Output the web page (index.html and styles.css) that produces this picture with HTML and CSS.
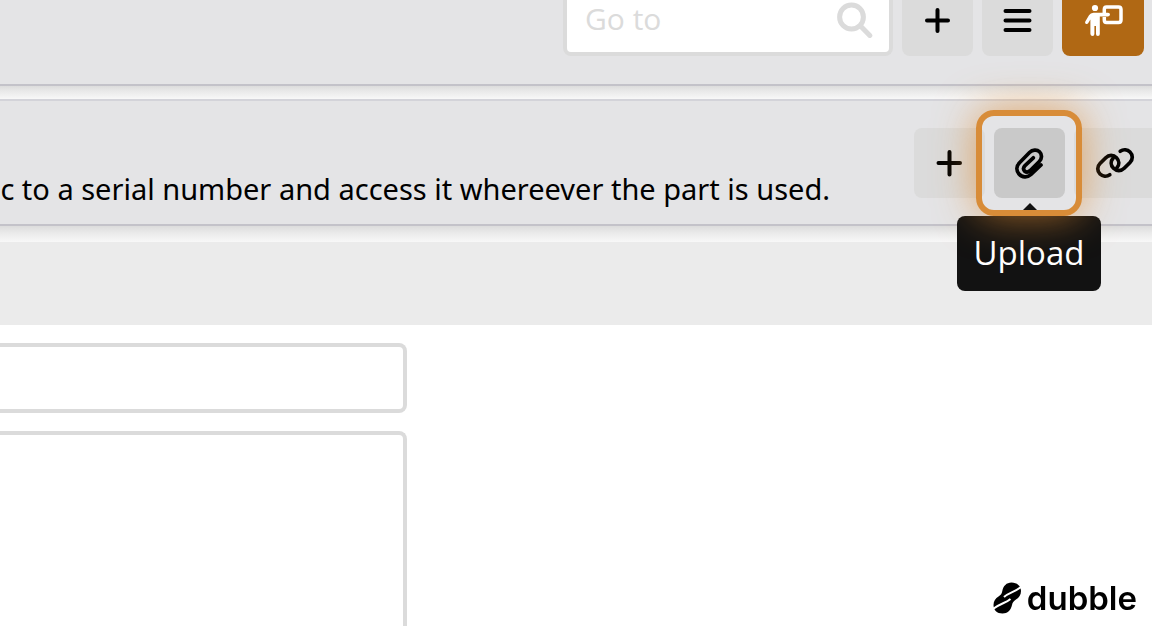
FILE: index.html
```html
<!DOCTYPE html>
<html lang="en">
<head>
<meta charset="utf-8">
<title>Serial number documents</title>
<link rel="stylesheet" href="styles.css">
</head>
<body>
<header class="topbar">
  <label class="search">
    <input class="search-input" type="text" placeholder="Go to" aria-label="Go to">
    <svg class="search-icon" viewBox="0 0 36 36" aria-hidden="true"><circle cx="14.500" cy="15" r="11.900"/><path d="M24 24.500l8.800 9"/></svg>
  </label>
  <button class="btn btn-top" aria-label="Add"><svg class="icon" viewBox="0 0 40 40"><path d="M19.500 10v21M9 20.500h21"/></svg></button>
  <button class="btn btn-top" aria-label="Menu"><svg class="icon" viewBox="0 0 40 40"><path d="M7.500 11h24M7.500 20.500h24M7.500 30h24"/></svg></button>
  <button class="btn btn-top btn-teach" aria-label="Training"><svg class="icon" viewBox="0 0 40 40"><path class="board" d="M21.300 13V9.500Q21.300 7 23.500 7H35.500Q38 7 38 9.500V20Q38 22.500 35.500 22.500H23.500Q21.300 22.500 21.300 20V17"/><circle class="solid" cx="12" cy="8" r="3.100"/><path class="solid" d="M10.500 12.800H25Q27 12.800 27 14.600T25 16.400H16.800V34Q16.800 36 14.900 36T13 34V26H11.400V34Q11.400 36 9.500 36T7.400 34V19.500L5.300 23Q4.500 24.500 3 23.900T2.300 21.500L6 15.300Q7.500 12.800 10.500 12.800Z"/></svg></button>
</header>
<section class="panel">
  <p class="description">c to a serial number and access it whereever the part is used.</p>
  <div class="tools">
    <button class="btn" aria-label="Add"><svg class="icon" viewBox="0 0 40 40"><path d="M19.500 9v22.500M8.500 20h21.500"/></svg></button>
    <div class="upload">
      <button class="btn btn-active" aria-label="Upload" aria-describedby="upload-tip"><svg class="icon" viewBox="0 0 40 40"><path class="line" d="M31 22L21 31.500C17.500 34.800 12 34.500 9 31C6 27.500 6.300 23 9.500 19.800L19.500 9.500C22.500 6.500 27 6.300 29.500 8.800C32.300 11.500 32 15.800 29.300 18.500L20 27.700C18.300 29.300 16 29.300 14.500 28C13.200 26.500 13.300 24.300 15 22.600L23.300 14.800"/></svg></button>
      <span class="tip" id="upload-tip" role="tooltip">Upload</span>
      <span class="ring"></span>
    </div>
    <button class="btn btn-link" aria-label="Link"><svg class="icon" viewBox="0 0 40 40"><path class="line" d="M16.800 31.800C13.500 34 9.500 33.500 7 31C4 28 4 23.500 7 20.500L12.800 14.700C15.800 11.700 20.500 11.700 23.500 14.700C26.500 17.700 26.500 22 23.800 25"/><path class="line" d="M27.200 8.200C30.500 6 34.500 6.500 37 9C40 12 40 16.500 37 19.500L31.200 25.300C28.200 28.300 23.500 28.300 20.500 25.300C17.500 22.300 17.500 18 20.200 15"/></svg></button>
  </div>
</section>
<div class="band"></div>
<main class="form">
  <input class="field" type="text" aria-label="Title">
  <textarea class="field field-tall" aria-label="Description"></textarea>
</main>
<footer class="brand">
  <svg class="brand-mark" viewBox="0 0 28 32" aria-hidden="true"><path d="M18.500.5C24 .5 28 4 28 9C28 13 26 15.500 23 17.500C20.500 19 19.500 20.500 19 23C18 28 14.500 31.500 9.500 31.500C4 31.500.5 28 .5 23C.5 19 2.500 16.500 5.500 14.500C8 13 8.800 11.500 9.300 9C10.300 4 13.500.5 18.500.5Z"/><path class="cut" d="M11 15C15 11 21 10.500 28 5M0 27C7 21.500 13 21 17.500 17"/></svg>
  <span>dubble</span>
</footer>
</body>
</html>
```
FILE: styles.css
```css
* { box-sizing: border-box; }
body {
  margin: 0;
  min-height: 100vh;
  display: flex;
  flex-direction: column;
  overflow: hidden;
  background: #fff;
  color: #000;
  font-family: "Open Sans", "Noto Sans", sans-serif;
}
.topbar {
  display: flex;
  align-items: flex-start;
  justify-content: flex-end;
  gap: 9px;
  height: 86px;
  padding-right: 8px;
  background: #e4e4e6;
  border-bottom: 2px solid #c3c2c9;
}
.search {
  display: flex;
  align-items: flex-start;
  width: 330px;
  height: 56px;
  padding: 2px 16px 0 18px;
  background: #fff;
  border: 4px solid #dbdbdb;
  border-top: 0;
  border-radius: 0 0 8px 8px;
}
.search-input {
  flex: 1;
  min-width: 0;
  height: 36px;
  padding: 0 0 4px;
  border: 0;
  outline: 0;
  background: none;
  font: 30px "Open Sans", "Noto Sans", sans-serif;
}
.search-input::placeholder { color: #dbdbdb; }
.search-icon {
  width: 36px;
  height: 36px;
  fill: none;
  stroke: #dbdbdb;
  stroke-width: 5;
  stroke-linecap: round;
}
.btn {
  display: flex;
  flex: none;
  align-items: center;
  justify-content: center;
  width: 71px;
  height: 70px;
  padding: 0;
  border: 0;
  border-radius: 8px;
  background: #dbdbdb;
  color: #000;
}
.btn-top {
  align-items: flex-start;
  height: 56px;
  border-radius: 0 0 8px 8px;
}
.btn-teach {
  width: 82px;
  background: #b06814;
  color: #fff;
}
.icon {
  width: 40px;
  height: 40px;
  overflow: visible;
  fill: none;
  stroke: currentColor;
  stroke-width: 4;
  stroke-linecap: round;
  stroke-linejoin: round;
}
.line { stroke-width: 3.7; }
.board { stroke-linecap: butt; stroke-width: 3.5; }
.solid { fill: currentColor; stroke: none; }
.panel {
  display: flex;
  height: 127px;
  margin-top: 13px;
  background: #e4e4e6;
  border-top: 2px solid #d3d3d9;
  border-bottom: 2px solid #c3c2c9;
}
.topbar, .panel { position: relative; }
.topbar::after, .panel::after {
  content: "";
  position: absolute;
  top: calc(100% + 2px);
  left: 0;
  right: 0;
  height: 13px;
  background: linear-gradient(#dcdcdc, #e9e9e9 40%, #f8f8f8);
}
.topbar { z-index: 1; }
.panel { z-index: 2; }
.panel::after { height: 16px; z-index: -1; }
.description {
  display: flex;
  flex: 1;
  justify-content: flex-end;
  min-width: 0;
  margin: 0;
  padding: 66px 84px 0 0;
  overflow: hidden;
  white-space: nowrap;
  font-family: "Noto Sans", sans-serif;
  font-size: 29px;
  line-height: 43px;
}
.tools {
  display: flex;
  flex: none;
  gap: 9px;
  padding-top: 27px;
}
.btn-link {
  width: 78px;
  border-radius: 8px 0 0 8px;
}
.upload { position: relative; height: 70px; z-index: 1; }
.btn-active { background: #c9c9c9; }
.tip {
  position: absolute;
  top: 88px;
  left: -37px;
  width: 144px;
  border-radius: 8px;
  background: #121212;
  color: #fff;
  font-size: 33px;
  line-height: 73px;
  padding-bottom: 2px;
  text-align: center;
}
.tip::before {
  content: "";
  position: absolute;
  bottom: 100%;
  left: 60px;
  border: 13px solid transparent;
  border-top-width: 0;
  border-bottom: 13px solid #121212;
}
.ring {
  position: absolute;
  inset: -18px -17px -18px -18px;
  border: 6px solid #d88c38;
  border-radius: 18px;
  box-shadow: 0 0 40px rgba(224, 140, 50, 0.7);
  pointer-events: none;
}
.band {
  height: 83px;
  margin-top: 16px;
  background: #ebebeb;
}
.form {
  display: flex;
  flex: 1;
  flex-direction: column;
  gap: 18px;
  width: 407px;
  padding-top: 18px;
}
.field {
  width: 100%;
  height: 70px;
  padding: 8px 16px;
  border: 4px solid #dbdbdb;
  border-left: 0;
  border-radius: 0 8px 8px 0;
  outline: 0;
  background: #fff;
  font: 30px "Open Sans", "Noto Sans", sans-serif;
}
.field-tall {
  flex: 1;
  border-bottom: 0;
  border-radius: 0 8px 0 0;
  resize: none;
}
.brand {
  position: fixed;
  right: 15px;
  bottom: 8px;
  display: flex;
  align-items: center;
  gap: 6px;
  font: 600 33px/40px Inter, sans-serif;
}
.brand-mark { width: 28px; height: 32px; }
.cut { fill: none; stroke: #fff; stroke-width: 2; }
```
